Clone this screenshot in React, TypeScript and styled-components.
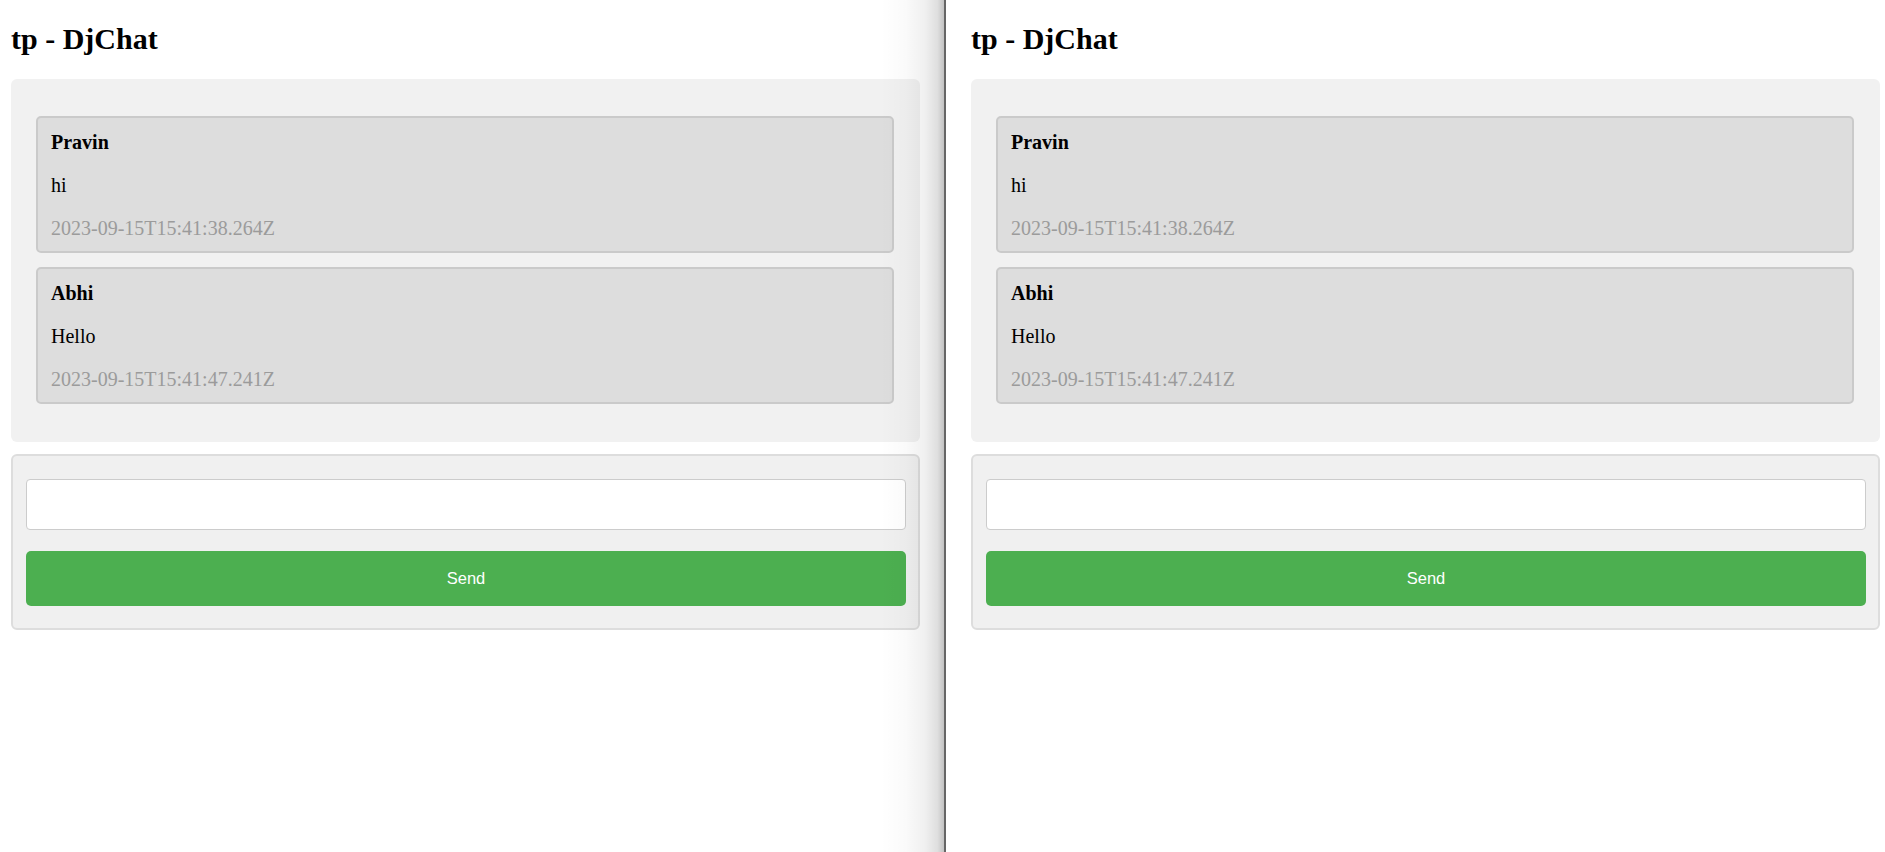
import React from "react";
import styled, { createGlobalStyle } from "styled-components";

const GlobalStyle = createGlobalStyle`
  html, body {
    margin: 0;
    padding: 0;
    background: #ffffff;
  }
  body {
    font-family: "Liberation Serif", "Times New Roman", serif;
    color: #000;
  }
`;

const Screen = styled.div`
  display: flex;
  height: 100vh;
  width: 100%;
  overflow: hidden;
`;

const Pane = styled.div<{ $padLeft: number; $padRight: number; $fixed?: number }>`
  position: relative;
  box-sizing: border-box;
  ${(p) => (p.$fixed ? `width: ${p.$fixed}px; flex: none;` : `flex: 1;`)}
  padding: 0 ${(p) => p.$padRight}px 0 ${(p) => p.$padLeft}px;
  display: flex;
  flex-direction: column;
`;

const EdgeShadow = styled.div`
  position: absolute;
  top: 0;
  right: 0;
  bottom: 0;
  width: 64px;
  pointer-events: none;
  background: linear-gradient(
    to right,
    rgba(0, 0, 0, 0) 0%,
    rgba(0, 0, 0, 0.02) 40%,
    rgba(0, 0, 0, 0.06) 70%,
    rgba(0, 0, 0, 0.13) 90%,
    rgba(0, 0, 0, 0.24) 100%
  );
`;

const Divider = styled.div`
  width: 2px;
  flex: none;
  background: #666666;
`;

const Title = styled.h2`
  margin: 21px 0 23px;
  font-size: 30px;
  line-height: 35px;
  font-weight: bold;
`;

const ChatBox = styled.div`
  background: #f1f1f1;
  border-radius: 6px;
  padding: 37px 26px 38px 25px;
  display: flex;
  flex-direction: column;
  gap: 14px;
`;

const Message = styled.div`
  background: #dddddd;
  border: 2px solid #cacaca;
  border-radius: 5px;
  padding: 13px 12px 11px 13px;
  display: flex;
  flex-direction: column;
  gap: 20px;
`;

const Line = styled.p<{ $variant?: "author" | "time" }>`
  margin: 0;
  font-size: 20px;
  line-height: 23px;
  font-weight: ${(p) => (p.$variant === "author" ? "bold" : "normal")};
  color: ${(p) => (p.$variant === "time" ? "#9b9b9b" : "#000")};
`;

const Composer = styled.form`
  margin-top: 12px;
  background: #f0f0f0;
  border: 2px solid #dddddd;
  border-radius: 6px;
  padding: 23px 12px 22px 13px;
  display: flex;
  flex-direction: column;
  gap: 21px;
`;

const Input = styled.input`
  box-sizing: border-box;
  height: 51px;
  width: 100%;
  border: 1px solid #cccccc;
  border-radius: 4px;
  background: #ffffff;
  padding: 0 12px;
  font-size: 20px;
  font-family: "Liberation Sans", Arial, sans-serif;
  outline: none;
`;

const SendButton = styled.button`
  height: 55px;
  width: 100%;
  border: none;
  border-radius: 5px;
  background: #4caf50;
  color: #ffffff;
  font-family: "Liberation Sans", Arial, sans-serif;
  font-size: 16.5px;
  cursor: pointer;
`;

type Msg = { author: string; text: string; time: string };

const messages: Msg[] = [
  { author: "Pravin", text: "hi", time: "2023-09-15T15:41:38.264Z" },
  { author: "Abhi", text: "Hello", time: "2023-09-15T15:41:47.241Z" },
];

const ChatView: React.FC = () => (
  <>
    <Title>tp - DjChat</Title>
    <ChatBox>
      {messages.map((m) => (
        <Message key={m.time}>
          <Line $variant="author">{m.author}</Line>
          <Line>{m.text}</Line>
          <Line $variant="time">{m.time}</Line>
        </Message>
      ))}
    </ChatBox>
    <Composer onSubmit={(e) => e.preventDefault()}>
      <Input type="text" />
      <SendButton type="submit">Send</SendButton>
    </Composer>
  </>
);

export default function App() {
  return (
    <>
      <GlobalStyle />
      <Screen>
        <Pane $fixed={944} $padLeft={11} $padRight={24}>
          <ChatView />
          <EdgeShadow />
        </Pane>
        <Divider />
        <Pane $padLeft={25} $padRight={5}>
          <ChatView />
        </Pane>
      </Screen>
    </>
  );
}
